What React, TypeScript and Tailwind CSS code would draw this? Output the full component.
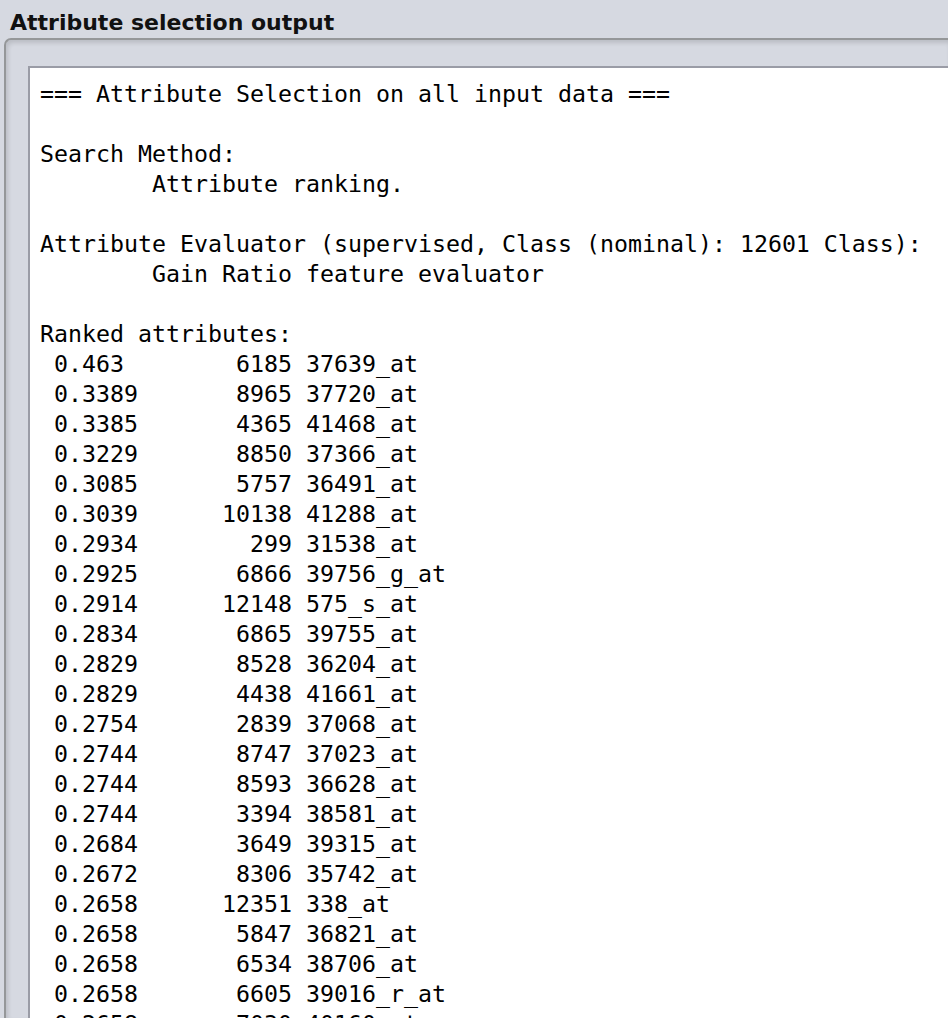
import React from 'react'

const rows: [string, string, string][] = [
  ['0.463', '6185', '37639_at'],
  ['0.3389', '8965', '37720_at'],
  ['0.3385', '4365', '41468_at'],
  ['0.3229', '8850', '37366_at'],
  ['0.3085', '5757', '36491_at'],
  ['0.3039', '10138', '41288_at'],
  ['0.2934', '299', '31538_at'],
  ['0.2925', '6866', '39756_g_at'],
  ['0.2914', '12148', '575_s_at'],
  ['0.2834', '6865', '39755_at'],
  ['0.2829', '8528', '36204_at'],
  ['0.2829', '4438', '41661_at'],
  ['0.2754', '2839', '37068_at'],
  ['0.2744', '8747', '37023_at'],
  ['0.2744', '8593', '36628_at'],
  ['0.2744', '3394', '38581_at'],
  ['0.2684', '3649', '39315_at'],
  ['0.2672', '8306', '35742_at'],
  ['0.2658', '12351', '338_at'],
  ['0.2658', '5847', '36821_at'],
  ['0.2658', '6534', '38706_at'],
  ['0.2658', '6605', '39016_r_at'],
  ['0.2658', '7030', '40160_at'],
]

const header = [
  '=== Attribute Selection on all input data ===',
  '',
  'Search Method:',
  '        Attribute ranking.',
  '',
  'Attribute Evaluator (supervised, Class (nominal): 12601 Class):',
  '        Gain Ratio feature evaluator',
  '',
  'Ranked attributes:',
]

export default function App() {
  const lines = [
    ...header,
    ...rows.map(([score, num, name]) => (' ' + score).padEnd(18 - num.length) + num + ' ' + name),
  ]

  return (
    <div className="w-[948px] h-[1018px] overflow-hidden bg-[#d6d9e1] flex flex-col">
      <div className="h-[38px] pl-[10px] pt-[7px] flex items-center shrink-0">
        <span className="text-[22px] font-bold text-[#111] font-['DejaVu_Sans',sans-serif] leading-none">
          Attribute selection output
        </span>
      </div>
      <div className="ml-[4px] flex-1 border-t-2 border-l-2 border-[#959799] rounded-tl-[7px] pl-[22px] pt-[26px] shadow-[inset_2px_3px_4px_rgba(0,0,0,0.13)] flex min-h-0">
        <div className="flex-1 bg-white border-t-2 border-l-2 border-[#9a9ca6] pl-[10px] pt-[11px] overflow-hidden">
          <pre className="font-['DejaVu_Sans_Mono',monospace] text-[23.25px] leading-[30px] text-black m-0">
            {lines.join('\n')}
          </pre>
        </div>
      </div>
    </div>
  )
}
